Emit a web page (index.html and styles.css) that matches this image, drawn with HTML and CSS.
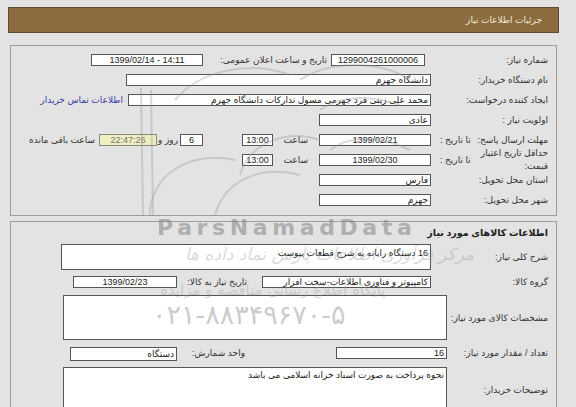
FILE: index.html
```html
<!DOCTYPE html>
<html lang="fa">
<head>
<meta charset="utf-8">
<title>جزئیات اطلاعات نیاز</title>
<link rel="stylesheet" href="styles.css">
</head>
<body>
<div class="page" dir="rtl">
  <div class="titlebar"><span>جزئیات اطلاعات نیاز</span></div>

  <div class="panel p1">
    <div class="row">
      <div class="lbl w123">شماره نیاز:</div>
      <div class="box c w94" dir="ltr">1299004261000006</div>
      <div class="lbl2">تاریخ و ساعت اعلان عمومی:</div>
      <div class="box c w112" dir="ltr">1399/02/14 - 14:11</div>
    </div>
    <div class="row">
      <div class="lbl">نام دستگاه خریدار:</div>
      <div class="box w305">دانشگاه جهرم</div>
    </div>
    <div class="row">
      <div class="lbl">ایجاد کننده درخواست:</div>
      <div class="box w303">محمد علی زینی فرد جهرمی مسول تداركات دانشگاه جهرم</div>
      <a class="link" href="#">اطلاعات تماس خریدار</a>
    </div>
    <div class="row">
      <div class="lbl">اولویت نیاز :</div>
      <div class="box w112">عادی</div>
    </div>
    <div class="row">
      <div class="lbl split"><span>مهلت ارسال پاسخ:</span><span>تا تاریخ :</span></div>
      <div class="box c w112" dir="ltr">1399/02/21</div>
      <div class="sa">ساعت</div>
      <div class="box c w31" dir="ltr">13:00</div>
      <div class="box c w23 days" dir="ltr">6</div>
      <div class="roz">روز و</div>
      <div class="box c w58 remain" dir="ltr">22:47:26</div>
      <div class="rest">ساعت باقی مانده</div>
    </div>
    <div class="row">
      <div class="lbl split"><span class="two">حداقل تاریخ اعتبار<br>قیمت:</span><span>تا تاریخ :</span></div>
      <div class="box c w112" dir="ltr">1399/02/30</div>
      <div class="sa">ساعت</div>
      <div class="box c w31" dir="ltr">13:00</div>
    </div>
    <div class="row">
      <div class="lbl">استان محل تحویل:</div>
      <div class="box w112">فارس</div>
    </div>
    <div class="row">
      <div class="lbl">شهر محل تحویل:</div>
      <div class="box w112">جهرم</div>
    </div>
  </div>

  <div class="panel p2">
    <div class="heading">اطلاعات کالاهای مورد نیاز</div>
    <div class="row2 r-desc">
      <div class="lbl">شرح کلی نیاز:</div>
      <div class="box tall w370">16 دستگاه رایانه به شرح قطعات پیوست</div>
    </div>
    <div class="row2 r-grp">
      <div class="lbl">گروه کالا:</div>
      <div class="box w169">کامپیوتر و فناوری اطلاعات-سخت افزار</div>
      <div class="lbl3 g">تاریخ نیاز به کالا:</div>
      <div class="box c w104" dir="ltr">1399/02/23</div>
    </div>
    <div class="row2 r-spec">
      <div class="lbl lw101">مشخصات کالای مورد نیاز:</div>
      <div class="box big w384"></div>
    </div>
    <div class="row2 r-qty">
      <div class="lbl lw101">تعداد / مقدار مورد نیاز:</div>
      <div class="box w111">16</div>
      <div class="lbl3 q">واحد شمارش:</div>
      <div class="box w107 h14">دستگاه</div>
    </div>
    <div class="row2 r-note">
      <div class="lbl lw101">توضیحات خریدار:</div>
      <div class="box note w384">نحوه پرداخت به صورت اسناد خزانه اسلامی می باشد</div>
    </div>
  </div>
</div>

<div class="wm">
  <svg class="wm-logo" width="576" height="407" viewBox="0 0 576 407">
    <path d="M141 88 L143 216 M151 90 L153 216" />
    <path d="M150 215 C150 175 190 150 235 160" />
    <path d="M215 215 C225 180 260 165 300 175" />
    <path d="M240 175 C250 140 290 130 320 140" />
    <path d="M175 100 C200 70 250 60 290 75" />
    <path d="M300 80 C330 60 380 60 410 80" />
    <path d="M320 110 C340 95 370 95 400 105" />
    <path d="M330 150 C350 135 380 135 410 150" />
  </svg>
  <div class="wm-brand">ParsNamadData</div>
  <div class="wm-fa1">مرکز فرآوری اطلاعات پارس نماد داده ها</div>
  <div class="wm-fa2">پایگاه اطلاع رسانی مناقصه و مزایده</div>
  <div class="wm-tel" dir="ltr">۰۲۱-۸۸۳۴۹۶۷۰-۵</div>
</div>
</body>
</html>
```

FILE: styles.css
```css
* { box-sizing: border-box; }

html, body {
  margin: 0;
  padding: 0;
}

body {
  background: #e3e3e3;
  font-family: "Liberation Sans", "DejaVu Sans", sans-serif;
  font-size: 9px;
  color: #333;
  position: relative;
  width: 576px;
  height: 407px;
  overflow: hidden;
}

.page {
  width: 551px;
  margin: 7px 0 0 8px;
  direction: rtl;
}

.titlebar {
  height: 26px;
  background: #8c6c3f;
  border: 1px solid #5c4a31;
  color: #f2e9d6;
  display: flex;
  align-items: center;
  padding-right: 16px;
  font-size: 9px;
}

.panel {
  margin: 0 2px;
  border: 1px solid #9d9d9d;
}

.p1 {
  margin-top: 12px;
  padding: 4px 8px 5px 0;
}

.p2 {
  margin-top: 5px;
  padding: 0 8px 10px 0;
}

.row {
  display: flex;
  align-items: center;
  height: 20px;
}

.lbl {
  width: 117px;
  flex: none;
  white-space: nowrap;
}

.w123 { width: 123px; }
.lw101 { width: 101px; }

.split {
  display: flex;
  justify-content: space-between;
  align-items: center;
  padding-left: 9px;
}

.two {
  line-height: 13px;
}

.lbl2 {
  width: 128px;
  flex: none;
  padding-right: 4px;
  white-space: nowrap;
}

.box {
  flex: none;
  height: 12px;
  border: 1px solid #555;
  background: #fff;
  line-height: 10px;
  padding: 0 2px;
  white-space: nowrap;
  overflow: hidden;
  color: #222;
  text-align: right;
}

.box.c { text-align: center; }

.w23 { width: 23px; }
.w31 { width: 31px; }
.w58 { width: 58px; }
.w94 { width: 94px; }
.w104 { width: 104px; }
.w107 { width: 107px; }
.w111 { width: 111px; }
.w112 { width: 112px; }
.w169 { width: 169px; }
.w303 { width: 303px; }
.w305 { width: 305px; }
.w370 { width: 370px; }
.w384 { width: 384px; }
.h14 { height: 14px; line-height: 12px; }

.link {
  margin-right: 5px;
  color: #3a3aa8;
  text-decoration: none;
  white-space: nowrap;
}

.sa {
  width: 46px;
  flex: none;
  padding-right: 11px;
}

.days { margin-right: 39px; }

.roz {
  width: 23px;
  flex: none;
  padding-right: 2px;
  white-space: nowrap;
}

.remain {
  background: #efeec2;
  border-color: #8a8a7a;
  color: #777;
}

.rest {
  margin-right: 4px;
  white-space: nowrap;
}

.heading {
  height: 20px;
  display: flex;
  align-items: center;
  font-weight: bold;
  color: #222;
  font-size: 9.5px;
}

.row2 {
  display: flex;
  align-items: center;
}

.r-desc { margin-top: 2px; }
.r-grp { margin-top: 6px; }
.r-spec { margin-top: 7px; }
.r-qty { margin-top: 7px; align-items: flex-start; }
.r-qty .lbl, .r-qty .lbl3 { line-height: 13px; }
.r-note { margin-top: 6px; }

.box.tall {
  height: 26px;
  line-height: 14px;
  padding-top: 1px;
}

.box.big { height: 45px; }

.box.note {
  height: 46px;
  line-height: 12px;
  padding-top: 1px;
}

.lbl3 {
  flex: none;
  white-space: nowrap;
}

.lbl3.g { width: 85px; padding-right: 15px; }
.lbl3.q { width: 159px; padding-right: 91px; }

/* watermark overlay */
.wm {
  position: absolute;
  left: 0;
  top: 0;
  width: 576px;
  height: 407px;
  pointer-events: none;
}

.wm-logo {
  position: absolute;
  left: 0;
  top: 0;
}

.wm-logo path {
  fill: none;
  stroke: rgba(150, 150, 150, 0.35);
  stroke-width: 2;
}

.wm-brand {
  position: absolute;
  left: 157px;
  top: 217px;
  font-family: "DejaVu Sans", sans-serif;
  font-weight: bold;
  font-size: 22px;
  line-height: 22px;
  letter-spacing: 4.6px;
  color: rgba(130, 130, 130, 0.55);
}

.wm-fa1 {
  position: absolute;
  left: 185px;
  top: 243px;
  font-family: "DejaVu Sans", sans-serif;
  font-size: 17px;
  line-height: 22px;
  font-style: italic;
  color: rgba(150, 150, 150, 0.35);
  white-space: nowrap;
  direction: rtl;
}

.wm-fa2 {
  position: absolute;
  left: 160px;
  top: 280px;
  font-family: "DejaVu Sans", sans-serif;
  font-size: 15px;
  line-height: 20px;
  color: rgba(150, 150, 150, 0.35);
  white-space: nowrap;
  direction: rtl;
}

.wm-tel {
  position: absolute;
  left: 152px;
  top: 298px;
  font-family: "DejaVu Sans", sans-serif;
  font-size: 27px;
  line-height: 34px;
  color: rgba(140, 140, 140, 0.45);
  white-space: nowrap;
}
```
